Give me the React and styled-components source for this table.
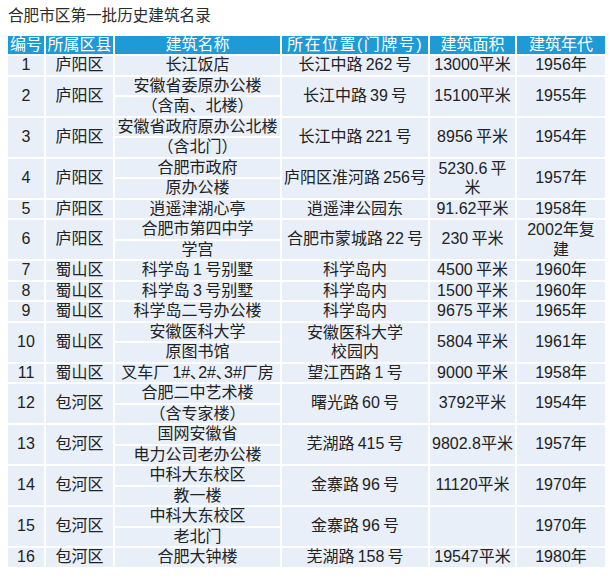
import React from "react";
import styled, { createGlobalStyle } from "styled-components";

const Global = createGlobalStyle`
  html, body { margin: 0; padding: 0; background: #ffffff; }
  body { font-family: "Liberation Sans", "Noto Sans CJK SC", sans-serif; color: #222; }
`;

const Page = styled.div`
  padding: 6px 0 0 6px;
  width: 608px;
`;

const Title = styled.h1`
  margin: 0 0 8px 2px;
  font-weight: normal;
  font-size: 15.6px;
  line-height: 20px;
  color: #2b2b2b;
  white-space: nowrap;
`;

const Table = styled.table`
  border-collapse: separate;
  border-spacing: 2px;
  table-layout: fixed;
  width: 601px;
  font-size: 16px;
`;

const Col = styled.col`
  width: ${(p) => p.$w}px;
`;

const HeadCell = styled.th`
  background: #1e9ad6;
  color: #ffffff;
  font-weight: normal;
  height: 18px;
  line-height: 18px;
  padding: 0;
  text-align: center;
  white-space: nowrap;
  overflow: hidden;
  letter-spacing: ${(p) => (p.$spread ? "1.5px" : "0")};
`;

const Cell = styled.td`
  background: #e8eff9;
  color: #222;
  height: 18.5px;
  line-height: ${(p) => (p.$wrap ? "19.5px" : "18.5px")};
  padding: 0;
  text-align: center;
  vertical-align: middle;
  white-space: nowrap;
  overflow: hidden;
`;

const T = "\u2009";

const rows = [
  { no: "1", area: "庐阳区", name: ["长江饭店"], addr: `长江中路${T}262${T}号`, size: "13000平米", year: "1956年" },
  { no: "2", area: "庐阳区", name: ["安徽省委原办公楼", "（含南、北楼）"], addr: `长江中路${T}39${T}号`, size: "15100平米", year: "1955年" },
  { no: "3", area: "庐阳区", name: ["安徽省政府原办公北楼", "（含北门）"], addr: `长江中路${T}221${T}号`, size: `8956${T}平米`, year: "1954年" },
  { no: "4", area: "庐阳区", name: ["合肥市政府", "原办公楼"], addr: `庐阳区淮河路${T}256号`, size: [`5230.6${T}平`, "米"], year: "1957年" },
  { no: "5", area: "庐阳区", name: ["逍遥津湖心亭"], addr: "逍遥津公园东", size: "91.62平米", year: "1958年" },
  { no: "6", area: "庐阳区", name: ["合肥市第四中学", "学宫"], addr: `合肥市蒙城路${T}22${T}号`, size: `230${T}平米`, year: ["2002年复", "建"] },
  { no: "7", area: "蜀山区", name: [`科学岛${T}1${T}号别墅`], addr: "科学岛内", size: `4500${T}平米`, year: "1960年" },
  { no: "8", area: "蜀山区", name: [`科学岛${T}3${T}号别墅`], addr: "科学岛内", size: `1500${T}平米`, year: "1960年" },
  { no: "9", area: "蜀山区", name: ["科学岛二号办公楼"], addr: "科学岛内", size: `9675${T}平米`, year: "1965年" },
  { no: "10", area: "蜀山区", name: ["安徽医科大学", "原图书馆"], addr: ["安徽医科大学", "校园内"], size: `5804${T}平米`, year: "1961年" },
  { no: "11", area: "蜀山区", name: [`叉车厂${T}1#､2#､3#厂房`], addr: `望江西路${T}1${T}号`, size: `9000${T}平米`, year: "1958年" },
  { no: "12", area: "包河区", name: ["合肥二中艺术楼", "（含专家楼）"], addr: `曙光路${T}60${T}号`, size: "3792平米", year: "1954年" },
  { no: "13", area: "包河区", name: ["国网安徽省", "电力公司老办公楼"], addr: `芜湖路${T}415${T}号`, size: "9802.8平米", year: "1957年" },
  { no: "14", area: "包河区", name: ["中科大东校区", "教一楼"], addr: `金寨路${T}96${T}号`, size: "11120平米", year: "1970年" },
  { no: "15", area: "包河区", name: ["中科大东校区", "老北门"], addr: `金寨路${T}96${T}号`, size: "", year: "1970年" },
  { no: "16", area: "包河区", name: ["合肥大钟楼"], addr: `芜湖路${T}158${T}号`, size: "19547平米", year: "1980年" },
];

const widths = [36, 67, 165, 146, 85, 88];
const heads = [
  { t: "编号" },
  { t: "所属区县" },
  { t: "建筑名称" },
  { t: "所在位置(门牌号)", spread: true },
  { t: "建筑面积" },
  { t: "建筑年代" },
];

function Lines({ value }) {
  if (Array.isArray(value)) {
    return value.map((v, i) => (
      <React.Fragment key={i}>
        {i > 0 && <br />}
        {v}
      </React.Fragment>
    ));
  }
  return value;
}

function Record({ r }) {
  const span = r.name.length;
  const wrapOf = (v) => Array.isArray(v);
  return (
    <>
      <tr>
        <Cell rowSpan={span}>{r.no}</Cell>
        <Cell rowSpan={span}>{r.area}</Cell>
        <Cell>{r.name[0]}</Cell>
        <Cell rowSpan={span} $wrap={wrapOf(r.addr)}>
          <Lines value={r.addr} />
        </Cell>
        <Cell rowSpan={span} $wrap={wrapOf(r.size)}>
          <Lines value={r.size} />
        </Cell>
        <Cell rowSpan={span} $wrap={wrapOf(r.year)}>
          <Lines value={r.year} />
        </Cell>
      </tr>
      {r.name.slice(1).map((n, i) => (
        <tr key={i}>
          <Cell>{n}</Cell>
        </tr>
      ))}
    </>
  );
}

export default function App() {
  return (
    <Page>
      <Global />
      <Title>合肥市区第一批历史建筑名录</Title>
      <Table>
        <colgroup>
          {widths.map((w, i) => (
            <Col key={i} $w={w} />
          ))}
        </colgroup>
        <thead>
          <tr>
            {heads.map((h) => (
              <HeadCell key={h.t} $spread={h.spread}>
                {h.t}
              </HeadCell>
            ))}
          </tr>
        </thead>
        <tbody>
          {rows.map((r) => (
            <Record key={r.no} r={r} />
          ))}
        </tbody>
      </Table>
    </Page>
  );
}
